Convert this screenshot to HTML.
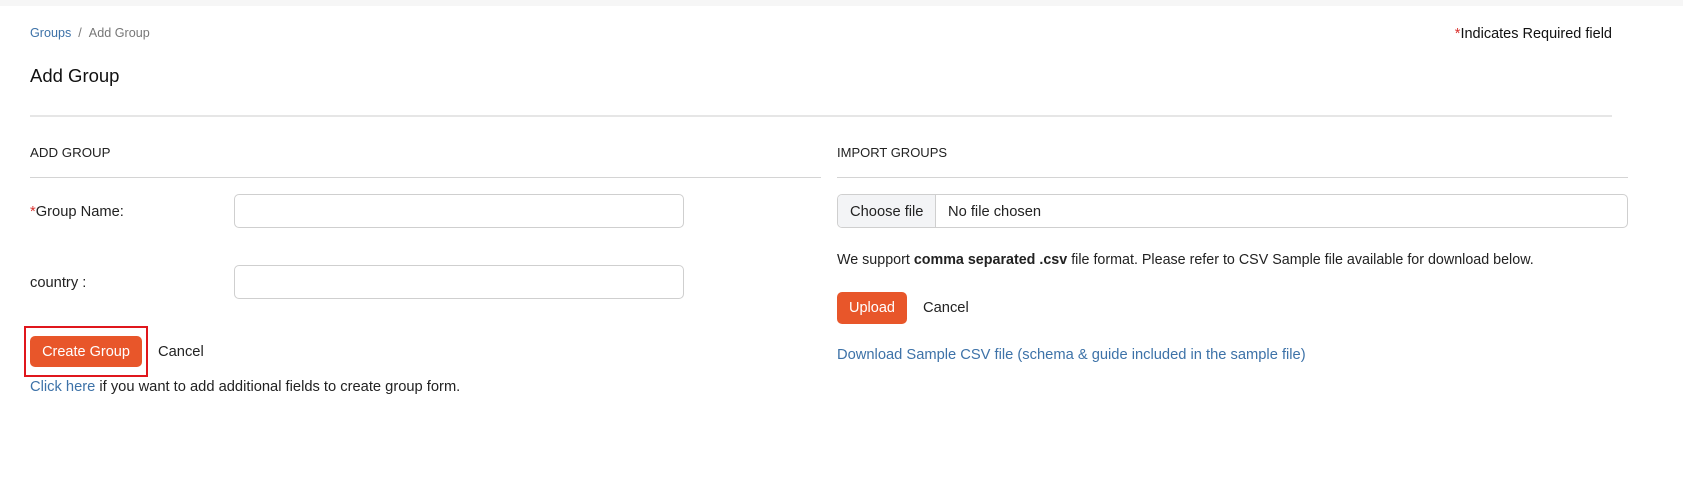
<!DOCTYPE html>
<html><head><style>
*{box-sizing:border-box;margin:0;padding:0}
body{width:1683px;height:491px;background:#fff;font-family:"Liberation Sans",sans-serif;color:#222;font-size:14.7px;position:relative;overflow:hidden}
.a{position:absolute;white-space:nowrap}
.blue{color:#3d72a8}
.red{color:#d9302c}
.inp{position:absolute;border:1px solid #cfcfcf;border-radius:5px;background:#fff}
.btn{position:absolute;background:#e8562a;color:#fff;border-radius:5px;display:flex;align-items:center;justify-content:center;font-size:14.5px}
.line{position:absolute;height:1px;background:#d4d4d4}
</style></head><body>
<div class="a" style="left:0;top:0;width:1683px;height:6px;background:#f6f6f6"></div>
<div class="a" style="left:30px;top:26px;font-size:12.6px"><span class="blue">Groups</span><span style="color:#777">&nbsp; / &nbsp;Add Group</span></div>
<div class="a" style="right:71px;top:26px;font-size:14.5px;color:#111"><span class="red">*</span>Indicates Required field</div>
<div class="a" style="left:30px;top:65px;font-size:18.5px;color:#111">Add Group</div>
<div class="line" style="left:30px;top:115px;width:1582px;height:2px;background:#e6e6e6"></div>
<div class="a" style="left:30px;top:145px;font-size:13.3px">ADD GROUP</div>
<div class="line" style="left:30px;top:177px;width:791px"></div>
<div class="a" style="left:837px;top:145px;font-size:13px">IMPORT GROUPS</div>
<div class="line" style="left:837px;top:177px;width:791px"></div>
<div class="a" style="left:30px;top:204px"><span class="red">*</span>Group Name:</div>
<div class="inp" style="left:234px;top:194px;width:450px;height:34px"></div>
<div class="a" style="left:30px;top:275px">country :</div>
<div class="inp" style="left:234px;top:265px;width:450px;height:34px"></div>
<div class="a" style="left:24px;top:326px;width:124px;height:51px;border:2px solid #e0161c"></div>
<div class="btn" style="left:30px;top:336px;width:112px;height:31px">Create Group</div>
<div class="a" style="left:158px;top:344px">Cancel</div>
<div class="a" style="left:30px;top:379px"><span class="blue">Click here</span> if you want to add additional fields to create group form.</div>
<div class="inp" style="left:837px;top:194px;width:791px;height:34px;overflow:hidden">
<div class="a" style="left:0;top:0;width:98px;height:32px;background:#f3f4f6;border-right:1px solid #cfcfcf"></div>
<div class="a" style="left:12px;top:9px">Choose file</div>
<div class="a" style="left:110px;top:9px">No file chosen</div>
</div>
<div class="a" style="left:837px;top:252px;font-size:14.3px">We support <b>comma separated .csv</b> file format. Please refer to CSV Sample file available for download below.</div>
<div class="btn" style="left:837px;top:292px;width:70px;height:32px">Upload</div>
<div class="a" style="left:923px;top:300px">Cancel</div>
<div class="a blue" style="left:837px;top:347px">Download Sample CSV file (schema &amp; guide included in the sample file)</div>
</body></html>
